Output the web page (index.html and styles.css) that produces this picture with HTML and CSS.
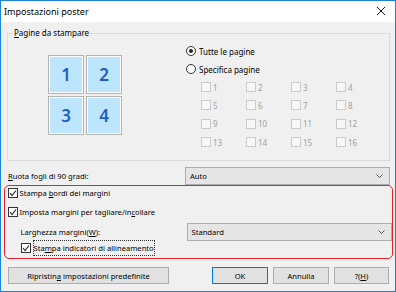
FILE: index.html
```html
<!DOCTYPE html>
<html lang="it">
<head>
    <meta charset="UTF-8">
    <title>Impostazioni poster</title>
    <link rel="stylesheet" href="styles.css">
</head>
<body>
    <div class="window">
        <div class="titlebar">
            <span class="title">Impostazioni poster</span>
            <svg class="close" width="10" height="10" viewBox="0 0 10 10">
                <path d="M1 1 L9 9 M9 1 L1 9" stroke="#111" stroke-width="1" fill="none"/>
            </svg>
        </div>
        <div class="content">
            <div class="group">
                <span class="group-label"><u>P</u>agine da stampare</span>
                <div class="tiles">
                    <div class="tile">1</div>
                    <div class="tile">2</div>
                    <div class="tile">3</div>
                    <div class="tile">4</div>
                </div>
                <div class="pages">
                    <div class="option"><span class="radio checked"></span><span>Tutte le pagine</span></div>
                    <div class="option"><span class="radio"></span><span>Specifica pagine</span></div>
                    <div class="page-grid" id="pageGrid">
                        <!-- filled by script below -->
                    </div>
                </div>
            </div>

            <div class="field-row rotate">
                <span class="field-label"><u>R</u>uota fogli di 90 gradi:</span>
                <div class="combo"><span>Auto</span><svg class="chevron" width="7" height="4" viewBox="0 0 7 4"><path d="M0.5 0.5 L3.5 3.5 L6.5 0.5" stroke="#555" fill="none"/></svg></div>
            </div>

            <div class="margins">
                <div class="check-row first"><span class="box checked"><svg width="8" height="8" viewBox="0 0 8 8"><path d="M1 4 L3 6.5 L7 1.5" stroke="#222" stroke-width="1.1" fill="none"/></svg></span><span>Stampa <u>b</u>ordi dei margini</span></div>
                <div class="check-row second"><span class="box checked"><svg width="8" height="8" viewBox="0 0 8 8"><path d="M1 4 L3 6.5 L7 1.5" stroke="#222" stroke-width="1.1" fill="none"/></svg></span><span>Imposta margini per tagliare/in<u>c</u>ollare</span></div>
                <div class="field-row width-row">
                    <span class="field-label">Larghezza margini(<u>W</u>):</span>
                    <div class="combo"><span>Standard</span><svg class="chevron" width="7" height="4" viewBox="0 0 7 4"><path d="M0.5 0.5 L3.5 3.5 L6.5 0.5" stroke="#555" fill="none"/></svg></div>
                </div>
                <div class="check-row sub"><span class="box checked"><svg width="8" height="8" viewBox="0 0 8 8"><path d="M1 4 L3 6.5 L7 1.5" stroke="#222" stroke-width="1.1" fill="none"/></svg></span><span class="focus">Sta<u>m</u>pa indicatori di allineamento</span></div>
            </div>

            <div class="buttons">
                <button class="btn reset">Ripristin<u>a</u> impostazioni predefinite</button>
                <button class="btn default">OK</button>
                <button class="btn">Annulla</button>
                <button class="btn">?(<u>H</u>)</button>
            </div>
        </div>
    </div>

    <script>
        const grid = document.getElementById("pageGrid");
        for (let i = 1; i <= 16; i++) {
            const cell = document.createElement("div");
            cell.classList.add("page-cell");
            cell.innerHTML = '<span class="box disabled"></span><span>' + i + '</span>';
            grid.appendChild(cell);
        }
    </script>
</body>
</html>
```

FILE: styles.css
```css
* {
    margin: 0;
    padding: 0;
    box-sizing: border-box;
}

body {
    font-family: 'Noto Sans', 'DejaVu Sans', sans-serif;
    font-size: 7.6px;
    color: #000;
    background: #fff;
}

u {
    text-decoration: underline;
    text-underline-offset: 1px;
}

.window {
    width: 396px;
    height: 292px;
    border: 1px solid #1883d7;
    background: #f0f0f0;
    display: flex;
    flex-direction: column;
}

.titlebar {
    height: 21px;
    background: #fff;
    display: flex;
    align-items: center;
    justify-content: space-between;
    padding: 0 9px 1px 3px;
}

.title {
    font-size: 9px;
}

.content {
    padding: 0 5px 0 6px;
}

/* group box */
.group {
    position: relative;
    margin-top: 11px;
    height: 128px;
    border: 1px solid #dcdcdc;
    display: flex;
    align-items: flex-start;
}

.group-label {
    position: absolute;
    top: -7px;
    left: 5px;
    padding: 0 1px;
    background: #f0f0f0;
    line-height: 12px;
    font-size: 8px;
}

.tiles {
    display: grid;
    grid-template-columns: 36px 36px;
    grid-auto-rows: 39px;
    gap: 2px;
    margin: 21px 0 0 40px;
}

.tile {
    background: #bde5fd;
    border: 1px solid #b3b3b3;
    box-shadow: inset 0 0 0 1px #fff;
    display: flex;
    align-items: center;
    justify-content: center;
    color: #1f5fc3;
    font-size: 17px;
    font-weight: 600;
}

.pages {
    margin: 8px 0 0 64px;
}

.option {
    height: 18px;
    display: flex;
    align-items: center;
    font-size: 8px;
}

.radio {
    width: 10px;
    height: 10px;
    border: 1px solid #333;
    border-radius: 50%;
    background: #fff;
    margin-right: 3px;
    display: flex;
    align-items: center;
    justify-content: center;
}

.radio.checked::after {
    content: '';
    width: 4px;
    height: 4px;
    border-radius: 50%;
    background: #222;
}

.page-grid {
    display: grid;
    grid-template-columns: repeat(4, 45px);
    grid-auto-rows: 18.3px;
    margin-left: 15px;
}

.page-cell {
    display: flex;
    align-items: center;
    color: #a0a0a0;
    font-size: 8px;
}

.box {
    width: 10px;
    height: 10px;
    border: 1px solid #333;
    background: #fff;
    margin-right: 2px;
    display: flex;
    align-items: center;
    justify-content: center;
    flex-shrink: 0;
}

.box.disabled {
    border-color: #cacaca;
    background: #f7f7f7;
}

/* label + dropdown rows */
.field-row {
    display: flex;
    align-items: center;
}

.rotate {
    margin-top: 6px;
    padding-left: 1px;
}

.field-label {
    flex: 1;
}

.combo {
    width: 205px;
    height: 18px;
    background: #e5e5e5;
    border: 1px solid #adadad;
    display: flex;
    align-items: center;
    justify-content: space-between;
    padding: 0 6px 0 4px;
}

/* highlighted (red) area */
.margins {
    margin: 0 -3px;
    height: 74px;
    border: 1.5px solid #e3242b;
    border-radius: 5px;
    padding: 0 0 0 2.5px;
}

.check-row {
    display: flex;
    align-items: center;
}

.check-row.first {
    height: 12px;
    margin-top: 0.5px;
}

.check-row.second {
    height: 12px;
    margin-top: 7px;
}

.width-row {
    margin-top: 5px;
    padding-left: 13px;
}

.width-row .combo {
    margin-right: 0.5px;
}

.check-row.sub {
    height: 16px;
    margin-top: -1px;
    padding-left: 13px;
}

.focus {
    border: 1px dotted #333;
    padding: 1px 0;
    line-height: 12px;
}

/* bottom buttons */
.buttons {
    display: flex;
    gap: 5px;
    margin-top: 8px;
    padding-left: 1px;
}

.btn {
    font-family: inherit;
    font-size: 7.6px;
    height: 17px;
    width: 56px;
    background: #e1e1e1;
    border: 1px solid #adadad;
    color: #000;
}

.btn.reset {
    width: 161px;
    margin-right: auto;
}

.btn.default {
    border-color: #0078d7;
}

.btn:last-child {
    width: 55px;
    margin-right: 1px;
}
```
